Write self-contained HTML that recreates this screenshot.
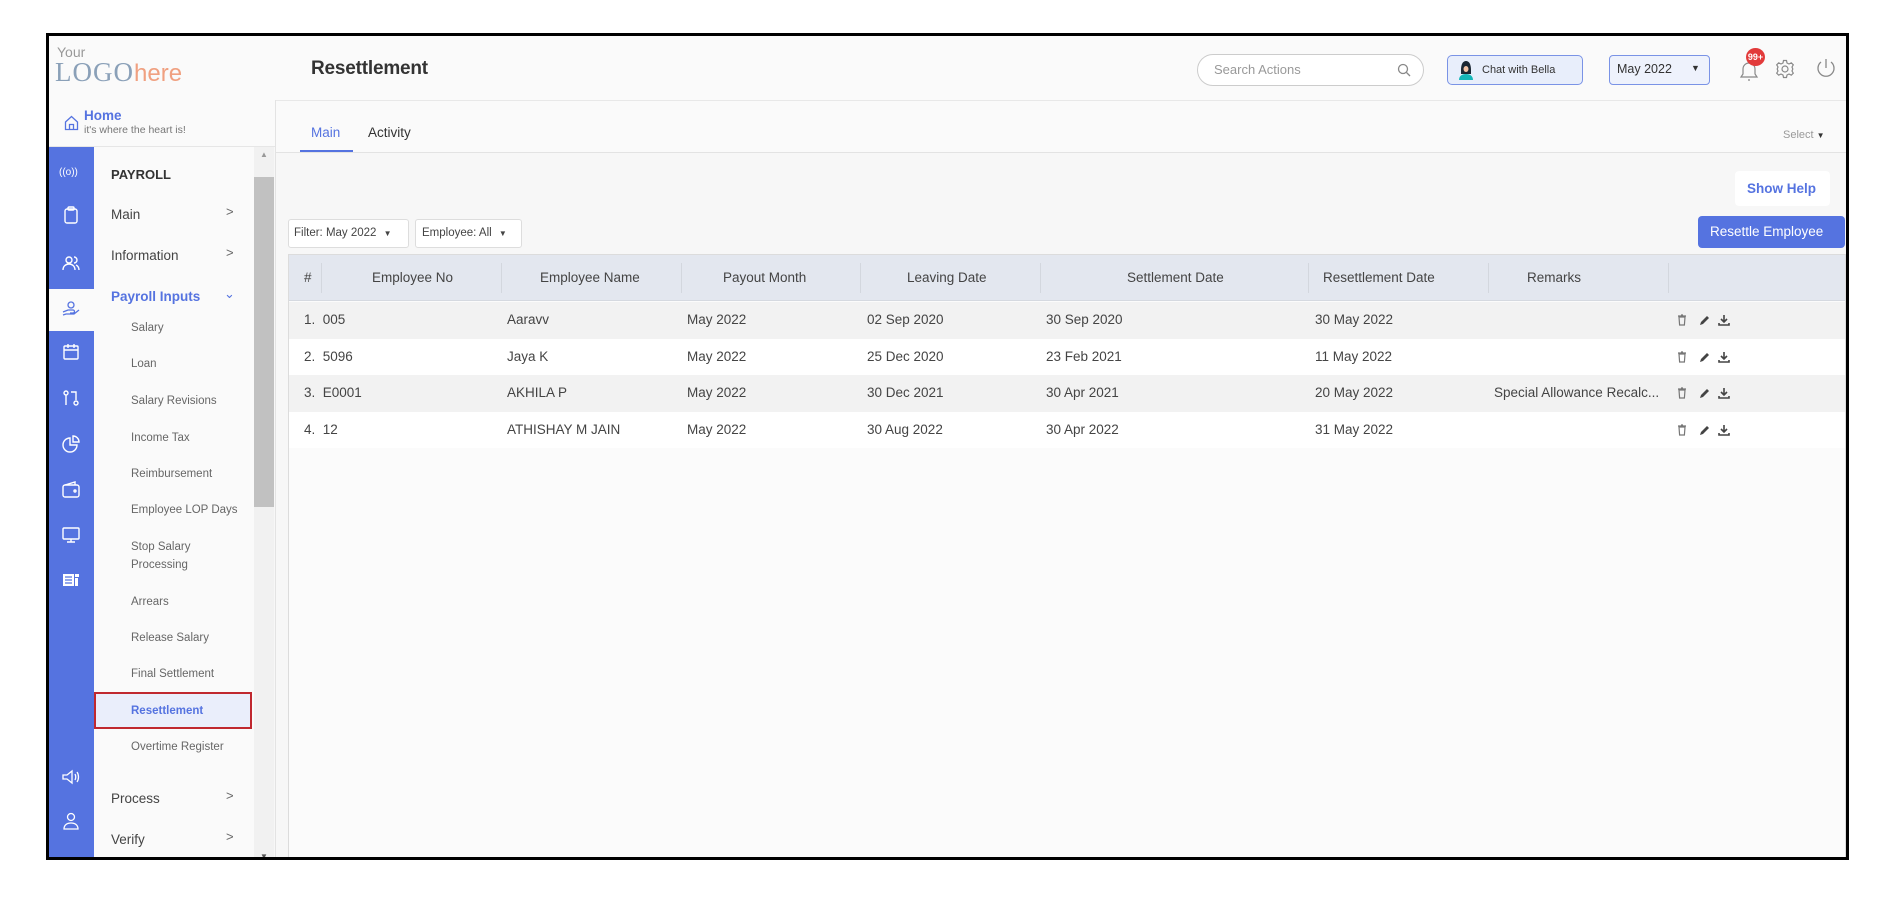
<!DOCTYPE html>
<html><head><meta charset="utf-8"><style>
*{box-sizing:border-box;margin:0;padding:0}
body{width:1891px;height:908px;background:#fff;font-family:"Liberation Sans",sans-serif;position:relative;overflow:hidden;color:#333}
.a{position:absolute}
.frame{left:46px;top:33px;width:1803px;height:827px;border:3px solid #000;background:#f7f7f7;overflow:hidden}
.t{position:absolute;white-space:nowrap}
.rail{left:0;top:111px;width:45px;height:730px;background:#5573e0}
.ic{position:absolute;left:12px;width:20px;height:20px}
.sub{font-size:11.5px;color:#666;left:58px}
.mi{font-size:13.5px;color:#444;left:40px}
.chev{font-size:13px;color:#666;left:133px}
.row{position:absolute;left:0;width:1556px;height:36.5px;font-size:13.5px;color:#444}
.row span{position:absolute;top:10px;white-space:nowrap}
.acts{position:absolute;left:1386px;top:11px;width:60px;height:14px}
</style></head><body>
<div class="a frame">
 <div class="a" style="left:0;top:0;width:226px;height:111px;background:#fafafa"></div>
 <div class="t" style="left:8px;top:8px;font-size:14px;color:#999">Your</div>
 <div class="t" style="left:6px;top:21px;font-size:27px;letter-spacing:1px;color:#8aa0b8;font-family:'Liberation Serif',serif">LOGO<span style="color:#f0a080;font-family:'Liberation Sans',sans-serif;font-size:24px;letter-spacing:0">here</span></div>
 <div class="a" style="left:0;top:110px;width:226px;height:1px;background:#e6e6e6"></div>
 <svg class="a" style="left:15px;top:79px" width="15" height="16" viewBox="0 0 15 16" fill="none" stroke="#5573e0" stroke-width="1.3"><path d="M1.5 7L7.5 1.5 13.5 7V14.5H1.5Z"/><path d="M5.5 14.5V9.5H9.5V14.5"/></svg>
 <div class="t" style="left:35px;top:72px;font-size:13.5px;color:#5573e0;font-weight:bold">Home</div>
 <div class="t" style="left:35px;top:88px;font-size:10.5px;color:#777">it's where the heart is!</div>
 <div class="a rail"></div>
 <div class="a" style="left:0;top:253px;width:45px;height:42px;background:#fafafa"></div>
 <div class="t" style="left:10px;top:131px;font-size:10px;color:#fff">((o))</div>
 <svg class="ic" style="top:169px" viewBox="0 0 20 20" fill="none" stroke="#fff" stroke-width="1.4"><rect x="4" y="4" width="12" height="14" rx="2"/><rect x="7" y="2" width="6" height="3" rx="1"/></svg>
 <svg class="ic" style="top:217px" viewBox="0 0 20 20" fill="none" stroke="#fff" stroke-width="1.4"><circle cx="8" cy="7" r="3"/><path d="M2 17c0-4 3-6 6-6s6 2 6 6M13 4a3 3 0 010 6M15 12c2 1 3 3 3 5"/></svg>
 <svg class="ic" style="top:263px" viewBox="0 0 20 20" fill="none" stroke="#5573e0" stroke-width="1.3"><path d="M2 13l5-2h5a1.5 1.5 0 010 3H9M2 16l3-1h8l5-4M10 3a3 3 0 100 6 3 3 0 000-6"/></svg>
 <svg class="ic" style="top:306px" viewBox="0 0 20 20" fill="none" stroke="#fff" stroke-width="1.4"><rect x="3" y="4" width="14" height="13" rx="1"/><path d="M3 8h14M7 2v4M13 2v4"/></svg>
 <svg class="ic" style="top:352px" viewBox="0 0 20 20" fill="none" stroke="#fff" stroke-width="1.4"><circle cx="5" cy="5" r="2"/><path d="M5 7v10M10 4h5v8"/><circle cx="15" cy="15" r="2"/></svg>
 <svg class="ic" style="top:398px" viewBox="0 0 20 20" fill="none" stroke="#fff" stroke-width="1.4"><path d="M9 4a7 7 0 107 7H9z"/><path d="M12 2a6 6 0 016 6h-6z"/></svg>
 <svg class="ic" style="top:444px" viewBox="0 0 20 20" fill="none" stroke="#fff" stroke-width="1.4"><rect x="2" y="5" width="16" height="12" rx="2"/><path d="M4 5l10-3v3"/><circle cx="14" cy="11" r="1"/></svg>
 <svg class="ic" style="top:489px" viewBox="0 0 20 20" fill="none" stroke="#fff" stroke-width="1.4"><rect x="2" y="3" width="16" height="11" rx="1"/><path d="M10 14v3M6 17h8"/></svg>
 <svg class="ic" style="top:534px" viewBox="0 0 20 20" fill="#fff"><rect x="2" y="4" width="11" height="12"/><rect x="14" y="4" width="4" height="3"/><rect x="14" y="8" width="3" height="8"/><path d="M4 7h7M4 10h7M4 13h7" stroke="#5573e0" stroke-width="1.3"/></svg>
 <svg class="ic" style="top:731px" viewBox="0 0 20 20" fill="none" stroke="#fff" stroke-width="1.3"><path d="M2 8h4l5-4v12l-5-4H2zM14 7c1 2 1 4 0 6M16 5c2 3 2 7 0 10"/></svg>
 <svg class="ic" style="top:775px" viewBox="0 0 20 20" fill="none" stroke="#fff" stroke-width="1.3"><circle cx="10" cy="6" r="3.5"/><path d="M3 18c0-4 3-6 7-6s7 2 7 6z"/></svg>
 <div class="a" style="left:45px;top:111px;width:160px;height:730px;background:#fafafa"></div>
 <div class="a" style="left:205px;top:111px;width:20px;height:730px;background:#f1f1f1"></div>
 <div class="a" style="left:205px;top:141px;width:20px;height:330px;background:#c1c1c1"></div>
 <div class="t" style="left:211px;top:114px;font-size:8px;color:#999">▲</div>
 <div class="t" style="left:211px;top:816px;font-size:8px;color:#555">▼</div>
 <div class="t mi" style="left:62px;top:131px;font-weight:bold;color:#333;font-size:13px">PAYROLL</div>
 <div class="t mi" style="left:62px;top:171px">Main</div><div class="t chev" style="left:177px;top:168px">&gt;</div>
 <div class="t mi" style="left:62px;top:212px">Information</div><div class="t chev" style="left:177px;top:209px">&gt;</div>
 <div class="t mi" style="left:62px;top:253px;color:#5573e0;font-weight:bold">Payroll Inputs</div><div class="t chev" style="left:175px;top:250px;color:#5573e0">&#8964;</div>
 <div class="t sub" style="left:82px;top:286px">Salary</div>
 <div class="t sub" style="left:82px;top:322px">Loan</div>
 <div class="t sub" style="left:82px;top:359px">Salary Revisions</div>
 <div class="t sub" style="left:82px;top:396px">Income Tax</div>
 <div class="t sub" style="left:82px;top:432px">Reimbursement</div>
 <div class="t sub" style="left:82px;top:468px">Employee LOP Days</div>
 <div class="t sub" style="left:82px;top:505px">Stop Salary</div>
 <div class="t sub" style="left:82px;top:523px">Processing</div>
 <div class="t sub" style="left:82px;top:560px">Arrears</div>
 <div class="t sub" style="left:82px;top:596px">Release Salary</div>
 <div class="t sub" style="left:82px;top:632px">Final Settlement</div>
 <div class="a" style="left:45px;top:656px;width:158px;height:37px;background:#eaeefb;border:2px solid #c0282f"></div>
 <div class="t sub" style="left:82px;top:669px;color:#5573e0;font-weight:bold">Resettlement</div>
 <div class="t sub" style="left:82px;top:705px">Overtime Register</div>
 <div class="t mi" style="left:62px;top:755px">Process</div><div class="t chev" style="left:177px;top:752px">&gt;</div>
 <div class="t mi" style="left:62px;top:796px">Verify</div><div class="t chev" style="left:177px;top:793px">&gt;</div>
 <div class="a" style="left:226px;top:0;width:1580px;height:64px;background:#fafafa"></div>
 <div class="a" style="left:226px;top:64px;width:1580px;height:1px;background:#e8e8e8"></div>
 <div class="a" style="left:226px;top:64px;width:1px;height:780px;background:#e3e3e3"></div>
 <div class="t" style="left:262px;top:22px;font-size:19px;color:#333;font-weight:bold;letter-spacing:-.2px">Resettlement</div>
 <div class="a" style="left:1148px;top:18px;width:227px;height:32px;border:1px solid #ccc;border-radius:16px;background:#fff"></div>
 <div class="t" style="left:1165px;top:26px;font-size:13px;color:#999">Search Actions</div>
 <svg class="a" style="left:1348px;top:27px" width="14" height="14" viewBox="0 0 14 14" fill="none" stroke="#888" stroke-width="1.3"><circle cx="6" cy="6" r="4.5"/><path d="M9.5 9.5L13 13"/></svg>
 <div class="a" style="left:1398px;top:19px;width:136px;height:30px;border:1px solid #7a93e6;border-radius:5px;background:#e8eefb"></div>
 <svg class="a" style="left:1409px;top:24px" width="16" height="20" viewBox="0 0 16 20"><path d="M3 10c0-6 2-9 5-9s5 3 5 9v4H3z" fill="#1b2733"/><path d="M1 20c0-4 3-6 7-6s7 2 7 6z" fill="#15b6b8"/><ellipse cx="8" cy="9" rx="2.5" ry="3" fill="#f3c3a5"/></svg>
 <div class="t" style="left:1433px;top:28px;font-size:11px;color:#333">Chat with Bella</div>
 <div class="a" style="left:1560px;top:19px;width:101px;height:30px;border:1px solid #7a93e6;border-radius:4px;background:#eef2fc"></div>
 <div class="t" style="left:1568px;top:26px;font-size:12.5px;color:#333">May 2022</div>
 <div class="t" style="left:1642px;top:27px;font-size:9px;color:#333">▼</div>
 <svg class="a" style="left:1688px;top:22px" width="24" height="26" viewBox="0 0 24 26" fill="none" stroke="#888" stroke-width="1.2"><path d="M4 19h16l-2-3v-5a6 6 0 00-12 0v5zM11 22h2"/></svg>
 <div class="a" style="left:1697px;top:12px;width:19px;height:18px;border-radius:50%;background:#e23a3a;color:#fff;font-size:9px;font-weight:bold;text-align:center;line-height:18px">99+</div>
 <svg class="a" style="left:1726px;top:23px" width="20" height="20" viewBox="0 0 20 20" fill="none" stroke="#888" stroke-width="1.2"><circle cx="10" cy="10" r="3"/><path d="M8.5 1.5h3l.5 2.5 2 1 2.3-1.2 2 2L17 8l.8 2-.8 2 1.3 2.2-2 2L14 15l-2 1-.5 2.5h-3L8 16l-2-1-2.3 1.2-2-2L3 12l-.8-2L3 8 1.7 5.8l2-2L6 5l2-1z"/></svg>
 <svg class="a" style="left:1766px;top:21px" width="22" height="24" viewBox="0 0 22 24" fill="none" stroke="#888" stroke-width="1.3"><path d="M11 2v9M6 5a8 8 0 1010 0"/></svg>
 <div class="a" style="left:227px;top:65px;width:1579px;height:52px;background:#fafafa"></div>
 <div class="a" style="left:227px;top:116px;width:1579px;height:1px;background:#e3e3e3"></div>
 <div class="t" style="left:262px;top:89px;font-size:13.5px;color:#5573e0">Main</div>
 <div class="a" style="left:251px;top:114px;width:53px;height:2px;background:#5573e0"></div>
 <div class="t" style="left:319px;top:89px;font-size:13.5px;color:#333">Activity</div>
 <div class="t" style="left:1734px;top:93px;font-size:11px;color:#999">Select <span style="color:#333;font-size:8px">▼</span></div>
 <div class="a" style="left:1686px;top:135px;width:95px;height:35px;background:#fff;border-radius:4px"></div>
 <div class="t" style="left:1698px;top:145px;font-size:13.5px;color:#5573e0;font-weight:bold">Show Help</div>
 <div class="a" style="left:1649px;top:180px;width:147px;height:32px;background:#5573e0;border-radius:4px"></div>
 <div class="t" style="left:1661px;top:188px;font-size:13.5px;color:#fff">Resettle Employee</div>
 <div class="a" style="left:239px;top:183px;width:121px;height:29px;background:#fff;border:1px solid #ddd;border-radius:3px"></div>
 <div class="t" style="left:245px;top:191px;font-size:11.5px;color:#444">Filter: May 2022 <span style="font-size:8px;margin-left:4px">▼</span></div>
 <div class="a" style="left:366px;top:183px;width:107px;height:29px;background:#fff;border:1px solid #ddd;border-radius:3px"></div>
 <div class="t" style="left:373px;top:191px;font-size:11.5px;color:#444">Employee: All <span style="font-size:8px;margin-left:4px">▼</span></div>
 <div class="a" style="left:239px;top:218px;width:1558px;height:630px;background:#fbfbfb;border:1px solid #dcdcdc">
  <div class="a" style="left:0;top:0;width:1556px;height:46px;background:#e3e7ef;border-bottom:1px solid #d5d9e0"></div>
  <div style="position:absolute;left:0;top:0;height:46px;width:1556px;font-size:13.5px;color:#444">
   <span class="t" style="left:15px;top:15px">#</span>
   <span class="t" style="left:83px;top:15px">Employee No</span>
   <span class="t" style="left:251px;top:15px">Employee Name</span>
   <span class="t" style="left:434px;top:15px">Payout Month</span>
   <span class="t" style="left:618px;top:15px">Leaving Date</span>
   <span class="t" style="left:838px;top:15px">Settlement Date</span>
   <span class="t" style="left:1034px;top:15px">Resettlement Date</span>
   <span class="t" style="left:1238px;top:15px">Remarks</span>
   <div class="a" style="left:32px;top:8px;width:1px;height:30px;background:#d3d7de"></div>
   <div class="a" style="left:212px;top:8px;width:1px;height:30px;background:#d3d7de"></div>
   <div class="a" style="left:392px;top:8px;width:1px;height:30px;background:#d3d7de"></div>
   <div class="a" style="left:571px;top:8px;width:1px;height:30px;background:#d3d7de"></div>
   <div class="a" style="left:751px;top:8px;width:1px;height:30px;background:#d3d7de"></div>
   <div class="a" style="left:1019px;top:8px;width:1px;height:30px;background:#d3d7de"></div>
   <div class="a" style="left:1199px;top:8px;width:1px;height:30px;background:#d3d7de"></div>
   <div class="a" style="left:1379px;top:8px;width:1px;height:30px;background:#d3d7de"></div>
  </div>
  <div class="row" style="top:47px;background:#f2f2f2"><span style="left:15px">1.&nbsp; 005</span><span style="left:218px">Aaravv</span><span style="left:398px">May 2022</span><span style="left:578px">02 Sep 2020</span><span style="left:757px">30 Sep 2020</span><span style="left:1026px">30 May 2022</span>
   <svg class="acts" viewBox="0 0 60 14"><path d="M3 3h8M6 2h2M4 4h6l-.6 8H4.6z" stroke="#777" fill="none" stroke-width="1.2"/><path d="M25 12l1-3 6-6 2 2-6 6z" fill="#444"/><path d="M49 2v7M46 6l3 3 3-3M44 10v2h10v-2" stroke="#444" fill="none" stroke-width="1.6"/></svg></div>
  <div class="row" style="top:83.5px;background:#fff"><span style="left:15px">2.&nbsp; 5096</span><span style="left:218px">Jaya K</span><span style="left:398px">May 2022</span><span style="left:578px">25 Dec 2020</span><span style="left:757px">23 Feb 2021</span><span style="left:1026px">11 May 2022</span>
   <svg class="acts" viewBox="0 0 60 14"><path d="M3 3h8M6 2h2M4 4h6l-.6 8H4.6z" stroke="#777" fill="none" stroke-width="1.2"/><path d="M25 12l1-3 6-6 2 2-6 6z" fill="#444"/><path d="M49 2v7M46 6l3 3 3-3M44 10v2h10v-2" stroke="#444" fill="none" stroke-width="1.6"/></svg></div>
  <div class="row" style="top:120px;background:#f2f2f2"><span style="left:15px">3.&nbsp; E0001</span><span style="left:218px">AKHILA P</span><span style="left:398px">May 2022</span><span style="left:578px">30 Dec 2021</span><span style="left:757px">30 Apr 2021</span><span style="left:1026px">20 May 2022</span><span style="left:1205px">Special Allowance Recalc...</span>
   <svg class="acts" viewBox="0 0 60 14"><path d="M3 3h8M6 2h2M4 4h6l-.6 8H4.6z" stroke="#777" fill="none" stroke-width="1.2"/><path d="M25 12l1-3 6-6 2 2-6 6z" fill="#444"/><path d="M49 2v7M46 6l3 3 3-3M44 10v2h10v-2" stroke="#444" fill="none" stroke-width="1.6"/></svg></div>
  <div class="row" style="top:156.5px;background:#fff"><span style="left:15px">4.&nbsp; 12</span><span style="left:218px">ATHISHAY M JAIN</span><span style="left:398px">May 2022</span><span style="left:578px">30 Aug 2022</span><span style="left:757px">30 Apr 2022</span><span style="left:1026px">31 May 2022</span>
   <svg class="acts" viewBox="0 0 60 14"><path d="M3 3h8M6 2h2M4 4h6l-.6 8H4.6z" stroke="#777" fill="none" stroke-width="1.2"/><path d="M25 12l1-3 6-6 2 2-6 6z" fill="#444"/><path d="M49 2v7M46 6l3 3 3-3M44 10v2h10v-2" stroke="#444" fill="none" stroke-width="1.6"/></svg></div>
 </div>
</div>
</body></html>
